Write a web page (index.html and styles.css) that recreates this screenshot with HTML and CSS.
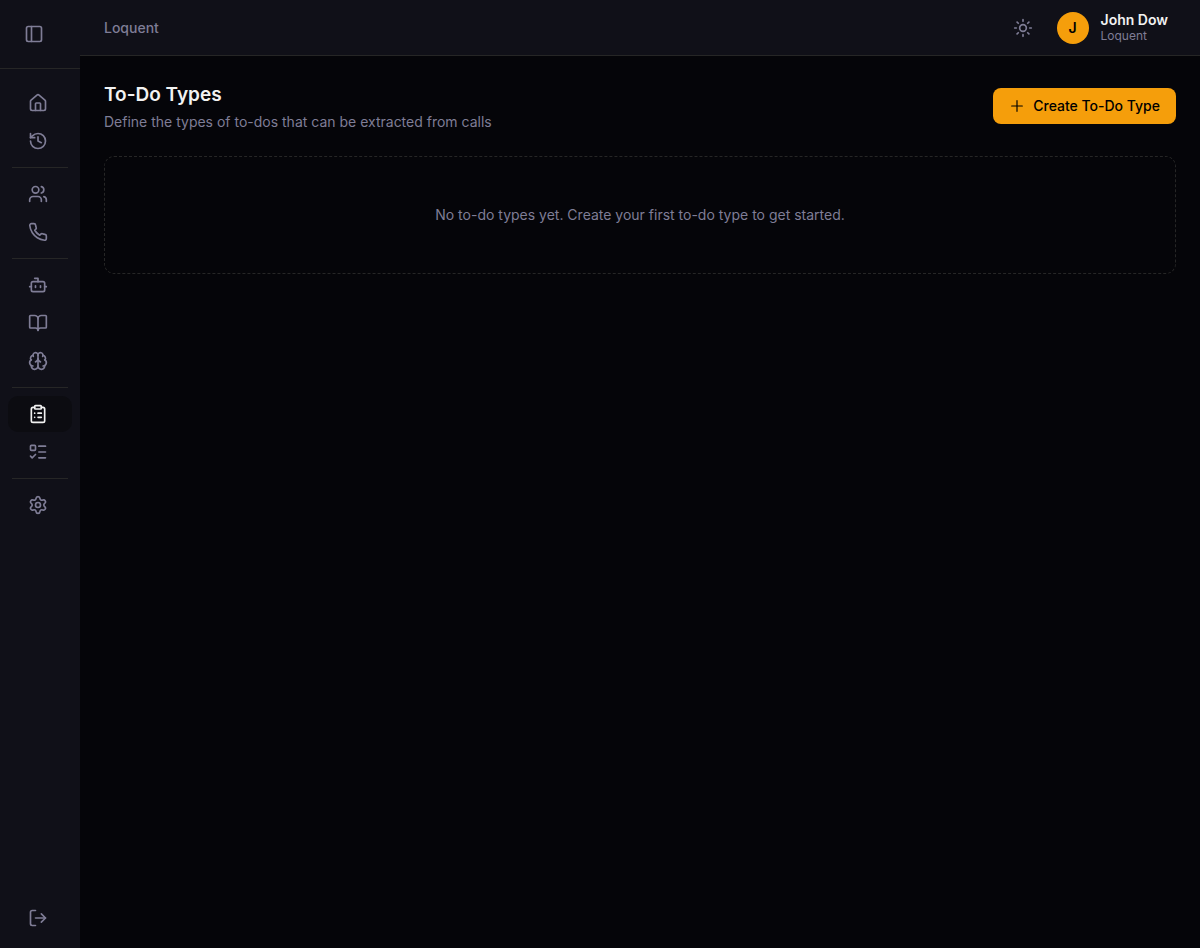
FILE: index.html
```html
<!DOCTYPE html>
<html lang="en">
<head>
<meta charset="utf-8">
<meta name="viewport" content="width=device-width, initial-scale=1">
<title>To-Do Types - Loquent</title>
<link rel="stylesheet" href="styles.css">
</head>
<body>
<div class="app">
  <aside class="sidebar">
    <div class="sidebar-top">
      <button class="icon-button" type="button" aria-label="Toggle sidebar">
        <svg class="icon" viewBox="0 0 24 24"><rect x="3" y="3" width="18" height="18" rx="2"/><path d="M9 3v18"/></svg>
      </button>
    </div>
    <nav class="nav" aria-label="Main">
      <div class="nav-group">
        <a class="nav-item" href="#" aria-label="Home"><svg class="icon" viewBox="0 0 24 24"><path d="M15 21v-8a1 1 0 0 0-1-1h-4a1 1 0 0 0-1 1v8"/><path d="M3 10a2 2 0 0 1 .709-1.528l7-5.999a2 2 0 0 1 2.582 0l7 5.999A2 2 0 0 1 21 10v9a2 2 0 0 1-2 2H5a2 2 0 0 1-2-2z"/></svg></a>
        <a class="nav-item" href="#" aria-label="History"><svg class="icon" viewBox="0 0 24 24"><path d="M3 12a9 9 0 1 0 9-9 9.75 9.75 0 0 0-6.74 2.74L3 8"/><path d="M3 3v5h5"/><path d="M12 7v5l4 2"/></svg></a>
      </div>
      <div class="nav-group">
        <a class="nav-item" href="#" aria-label="Contacts"><svg class="icon" viewBox="0 0 24 24"><path d="M16 21v-2a4 4 0 0 0-4-4H6a4 4 0 0 0-4 4v2"/><circle cx="9" cy="7" r="4"/><path d="M22 21v-2a4 4 0 0 0-3-3.87"/><path d="M16 3.13a4 4 0 0 1 0 7.75"/></svg></a>
        <a class="nav-item" href="#" aria-label="Phone"><svg class="icon" viewBox="0 0 24 24"><path d="M22 16.92v3a2 2 0 0 1-2.18 2 19.79 19.79 0 0 1-8.63-3.07 19.5 19.5 0 0 1-6-6 19.79 19.79 0 0 1-3.07-8.67A2 2 0 0 1 4.11 2h3a2 2 0 0 1 2 1.72 12.84 12.84 0 0 0 .7 2.81 2 2 0 0 1-.45 2.11L8.09 9.91a16 16 0 0 0 6 6l1.27-1.27a2 2 0 0 1 2.11-.45 12.84 12.84 0 0 0 2.81.7A2 2 0 0 1 22 16.92z"/></svg></a>
      </div>
      <div class="nav-group">
        <a class="nav-item" href="#" aria-label="Agents"><svg class="icon" viewBox="0 0 24 24"><path d="M12 8V4H8"/><rect x="4" y="8" width="16" height="12" rx="2"/><path d="M2 14h2M20 14h2M15 13v2M9 13v2"/></svg></a>
        <a class="nav-item" href="#" aria-label="Knowledge"><svg class="icon" viewBox="0 0 24 24"><path d="M12 7v14"/><path d="M3 18a1 1 0 0 1-1-1V4a1 1 0 0 1 1-1h5a4 4 0 0 1 4 4 4 4 0 0 1 4-4h5a1 1 0 0 1 1 1v13a1 1 0 0 1-1 1h-6a3 3 0 0 0-3 3 3 3 0 0 0-3-3z"/></svg></a>
        <a class="nav-item" href="#" aria-label="Memory"><svg class="icon" viewBox="0 0 24 24"><path d="M12 18V5"/><path d="M15 13a4.17 4.17 0 0 1-3-4 4.17 4.17 0 0 1-3 4"/><path d="M17.598 6.5A3 3 0 1 0 12 5a3 3 0 1 0-5.598 1.5"/><path d="M17.997 5.125a4 4 0 0 1 2.526 5.77"/><path d="M18 18a4 4 0 0 0 2-7.464"/><path d="M19.967 17.483A4 4 0 1 1 12 18a4 4 0 1 1-7.967-.517"/><path d="M6 18a4 4 0 0 1-2-7.464"/><path d="M6.003 5.125a4 4 0 0 0-2.526 5.77"/></svg></a>
      </div>
      <div class="nav-group">
        <a class="nav-item nav-item-active" href="#" aria-label="To-Do Types" aria-current="page"><svg class="icon" viewBox="0 0 24 24"><rect x="8" y="2" width="8" height="4" rx="1"/><path d="M16 4h2a2 2 0 0 1 2 2v14a2 2 0 0 1-2 2H6a2 2 0 0 1-2-2V6a2 2 0 0 1 2-2h2"/><path d="M12 11h4M12 16h4M8 11h.01M8 16h.01"/></svg></a>
        <a class="nav-item" href="#" aria-label="To-Dos"><svg class="icon" viewBox="0 0 24 24"><rect x="3" y="4" width="6" height="6" rx="1"/><path d="m3 17 2 2 4-4"/><path d="M13 5h8M13 12h8M13 19h8"/></svg></a>
      </div>
      <div class="nav-group">
        <a class="nav-item" href="#" aria-label="Settings"><svg class="icon" viewBox="0 0 24 24"><path d="M9.671 4.136a2.34 2.34 0 0 1 4.659 0 2.34 2.34 0 0 0 3.319 1.915 2.34 2.34 0 0 1 2.33 4.033 2.34 2.34 0 0 0 0 3.831 2.34 2.34 0 0 1-2.33 4.033 2.34 2.34 0 0 0-3.319 1.915 2.34 2.34 0 0 1-4.659 0 2.34 2.34 0 0 0-3.32-1.915 2.34 2.34 0 0 1-2.33-4.033 2.34 2.34 0 0 0 0-3.831A2.34 2.34 0 0 1 6.35 6.051a2.34 2.34 0 0 0 3.319-1.915"/><circle cx="12" cy="12" r="3"/></svg></a>
      </div>
    </nav>
    <div class="sidebar-bottom">
      <button class="nav-item" type="button" aria-label="Log out"><svg class="icon" viewBox="0 0 24 24"><path d="M9 21H5a2 2 0 0 1-2-2V5a2 2 0 0 1 2-2h4"/><path d="m16 17 5-5-5-5"/><path d="M21 12H9"/></svg></button>
    </div>
  </aside>
  <div class="content">
    <header class="topbar">
      <span class="workspace">Loquent</span>
      <div class="topbar-actions">
        <button class="icon-button" type="button" aria-label="Toggle theme">
          <svg class="icon" viewBox="0 0 24 24"><circle cx="12" cy="12" r="4"/><path d="M12 2v2M12 20v2M4.93 4.93l1.41 1.41M17.66 17.66l1.41 1.41M2 12h2M20 12h2M6.34 17.66l-1.41 1.41M19.07 4.93l-1.41 1.41"/></svg>
        </button>
        <button class="account" type="button">
          <span class="avatar">J</span>
          <span class="account-text">
            <span class="account-name">John Dow</span>
            <span class="account-org">Loquent</span>
          </span>
        </button>
      </div>
    </header>
    <main class="main">
      <div class="page-head">
        <div class="page-titles">
          <h1 class="title">To-Do Types</h1>
          <p class="subtitle">Define the types of to-dos that can be extracted from calls</p>
        </div>
        <button class="create" type="button">
          <svg class="icon icon-small" viewBox="0 0 24 24"><path d="M4 12h16M12 4v16"/></svg>
          Create To-Do Type
        </button>
      </div>
      <p class="empty">No to-do types yet. Create your first to-do type to get started.</p>
    </main>
  </div>
</div>
</body>
</html>
```
FILE: styles.css
```css
:root {
  --bg: #050509;
  --panel: #101018;
  --line: #262626;
  --muted: #7f7d96;
  --text: #f2f2f2;
  --accent: #f59e0b;
}

* {
  box-sizing: border-box;
}

body {
  margin: 0;
  background: var(--bg);
  color: var(--text);
  font-family: Inter, sans-serif;
  font-size: 14px;
  line-height: 20px;
}

button {
  padding: 0;
  border: 0;
  background: none;
  color: inherit;
  font: inherit;
  text-align: left;
  cursor: pointer;
}

.app {
  display: flex;
  min-height: 100vh;
}

.icon {
  display: block;
  flex: none;
  width: 20px;
  height: 20px;
  fill: none;
  stroke: currentColor;
  stroke-width: 2;
  stroke-linecap: round;
  stroke-linejoin: round;
}

.icon-small {
  width: 16px;
  height: 16px;
  stroke-width: 1.75;
}

.icon-button {
  display: grid;
  place-items: center;
  width: 36px;
  height: 36px;
  border-radius: 8px;
  color: var(--muted);
}

.sidebar {
  display: flex;
  flex: none;
  flex-direction: column;
  width: 80px;
  background: var(--panel);
}

.sidebar-top {
  padding: 16px;
  border-bottom: 1px solid var(--line);
}

.nav {
  flex: 1;
  padding: 16px 8px;
}

.nav-group {
  display: grid;
  gap: 2px;
}

.nav-group + .nav-group::before {
  content: "";
  height: 1px;
  margin: 8px 4px 6px;
  background: var(--line);
}

.nav-item {
  display: flex;
  align-items: center;
  width: 100%;
  height: 36px;
  padding-left: 20px;
  border-radius: 10px;
  color: var(--muted);
}

.nav-item-active {
  background: #0c0c11;
  color: var(--text);
}

.sidebar-bottom {
  padding: 12px 8px;
}

.content {
  flex: 1;
  min-width: 0;
}

.topbar {
  display: flex;
  align-items: center;
  justify-content: space-between;
  height: 56px;
  padding: 0 24px;
  background: var(--panel);
  border-bottom: 1px solid var(--line);
}

.workspace {
  color: var(--muted);
  font-weight: 500;
}

.topbar-actions {
  display: flex;
  align-items: center;
  gap: 8px;
}

.account {
  display: flex;
  align-items: center;
  gap: 12px;
  padding: 0 8px;
}

.avatar {
  display: grid;
  place-items: center;
  width: 32px;
  height: 32px;
  border-radius: 50%;
  background: var(--accent);
  color: #000;
  font-weight: 600;
}

.account-text {
  display: grid;
}

.account-name {
  font-weight: 600;
  line-height: 16px;
}

.account-org {
  color: var(--muted);
  font-size: 12px;
  line-height: 16px;
}

.main {
  padding: 24px;
}

.page-head {
  display: flex;
  align-items: center;
  justify-content: space-between;
  gap: 16px;
  margin-bottom: 24px;
}

.title {
  margin: 0 0 2px;
  font-size: 19px;
  font-weight: 600;
  line-height: 30px;
}

.subtitle {
  margin: 0;
  color: var(--muted);
}

.create {
  display: flex;
  align-items: center;
  gap: 8px;
  height: 36px;
  padding: 0 16px;
  border-radius: 8px;
  background: var(--accent);
  color: #000;
  font-weight: 500;
}

.empty {
  margin: 0;
  padding: 48px 24px;
  border: 1px dashed var(--line);
  border-radius: 10px;
  color: var(--muted);
  text-align: center;
}
```
